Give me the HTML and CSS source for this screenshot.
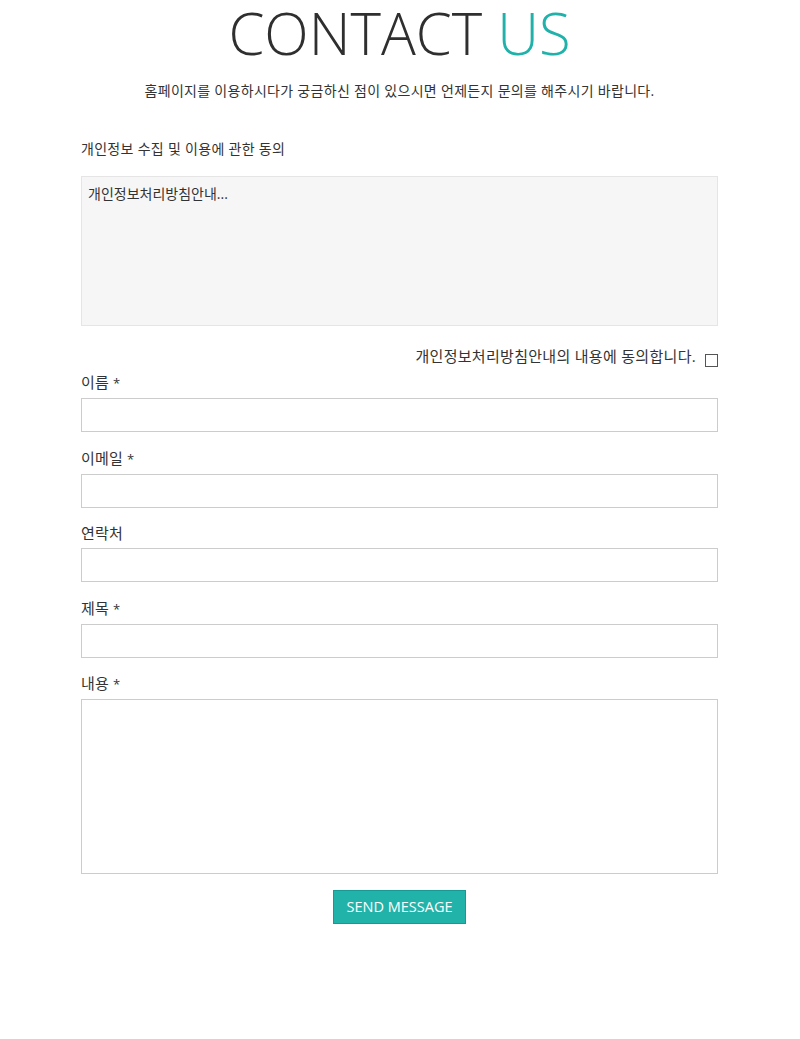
FILE: index.html
```html
<!DOCTYPE html>
<html lang="ko">
<head>
<meta charset="utf-8">
<title>Contact Us</title>
<link rel="stylesheet" href="styles.css">
</head>
<body>
<div class="wrap">
  <h1 class="title">CONTACT <span class="accent">US</span></h1>
  <p class="lead">홈페이지를 이용하시다가 궁금하신 점이 있으시면 언제든지 문의를 해주시기 바랍니다.</p>
  <form class="form">
    <div class="consent-title">개인정보 수집 및 이용에 관한 동의</div>
    <div class="policy">개인정보처리방침안내...</div>
    <label class="agree">개인정보처리방침안내의 내용에 동의합니다. <span class="box"></span></label>
    <div class="field">
      <div class="label">이름 <span class="req">*</span></div>
      <div class="input"></div>
    </div>
    <div class="field">
      <div class="label">이메일 <span class="req">*</span></div>
      <div class="input"></div>
    </div>
    <div class="field">
      <div class="label">연락처</div>
      <div class="input"></div>
    </div>
    <div class="field">
      <div class="label">제목 <span class="req">*</span></div>
      <div class="input"></div>
    </div>
    <div class="field">
      <div class="label">내용 <span class="req">*</span></div>
      <div class="input textarea"></div>
    </div>
    <div class="actions">
      <span class="btn">SEND MESSAGE</span>
    </div>
  </form>
</div>
</body>
</html>
```
FILE: styles.css
```css
html, body {
  margin: 0;
  padding: 0;
  background: #fff;
}
body {
  font-family: "Open Sans", "Noto Sans CJK KR", sans-serif;
  color: #333;
  font-size: 14px;
}
.wrap {
  width: 637px;
  margin: 0 0 0 81px;
}
.title {
  margin: -7px 0 0;
  text-align: center;
  font-size: 58px;
  font-weight: 300;
  line-height: 80px;
  color: #2f2f2f;
}
.accent {
  color: #20b2aa;
}
.lead {
  margin: 8px 0 0;
  text-align: center;
  font-size: 14px;
  line-height: 20px;
  letter-spacing: 0.3px;
}
.form {
  margin-top: 38px;
}
.consent-title {
  line-height: 20px;
  letter-spacing: 0.3px;
}
.policy {
  margin-top: 17px;
  height: 150px;
  box-sizing: border-box;
  background: #f6f6f6;
  border: 1px solid #e5e5e5;
  padding: 7px 6px;
  line-height: 20px;
}
.agree {
  display: flex;
  justify-content: flex-end;
  align-items: center;
  gap: 9px;
  margin: 18px 0 5px;
  line-height: 22px;
  font-size: 15px;
  letter-spacing: 0.3px;
}
.box {
  width: 11px;
  height: 11px;
  border: 1px solid #555;
  background: #fff;
  margin-top: 10px;
}
.label {
  line-height: 20px;
  margin-bottom: 5px;
  font-size: 15px;
  letter-spacing: 0.2px;
}
.field + .field {
  margin-top: 15.5px;
}
.req {
  font-size: 13px;
}
.input {
  height: 34px;
  box-sizing: border-box;
  border: 1px solid #ccc;
  background: #fff;
}
.textarea {
  height: 175px;
}
.actions {
  display: flex;
  justify-content: center;
  margin-top: 16px;
}
.btn {
  display: inline-block;
  width: 133px;
  height: 34px;
  box-sizing: border-box;
  line-height: 32px;
  text-align: center;
  background: #21b3aa;
  border: 1px solid #179a93;
  color: #fff;
  font-size: 14.5px;
}
```
